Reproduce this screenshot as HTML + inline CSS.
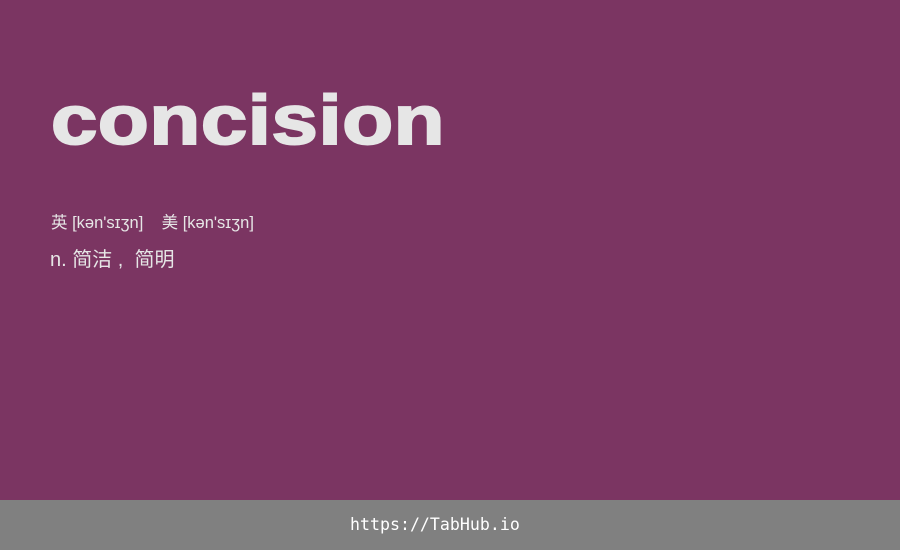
<!DOCTYPE html>
<html><head><meta charset="utf-8"><style>
html,body{margin:0;padding:0;}
body{width:900px;height:550px;background:#7b3562;position:relative;overflow:hidden;font-family:"Liberation Sans","Noto Sans CJK SC",sans-serif;color:#e6e6e6;}
.t{position:absolute;left:51px;top:70px;font-size:70px;font-weight:bold;line-height:100px;white-space:nowrap;transform:scaleX(1.19);transform-origin:left top;-webkit-text-stroke:2px #e6e6e6;letter-spacing:0.5px;}
.p{position:absolute;left:51px;top:213px;font-size:16.5px;line-height:20px;white-space:nowrap;}
.d{position:absolute;left:50px;top:248px;font-size:20px;line-height:24px;white-space:nowrap;}
.f{position:absolute;left:350px;top:500px;height:50px;line-height:50px;font-family:"DejaVu Sans Mono",monospace;font-size:16.6px;color:#fff;white-space:nowrap;}
.b{position:absolute;left:0;top:500px;width:900px;height:50px;background:#808080;}
</style></head><body>
<div class="t">concision</div>
<div class="p">英 [kən'sɪʒn]&nbsp;&nbsp;&nbsp; 美 [kən'sɪʒn]</div>
<div class="d">n. 简洁&nbsp;,&nbsp;&nbsp;简明</div>
<div class="b"></div>
<div class="f">https://TabHub.io</div>
</body></html>
